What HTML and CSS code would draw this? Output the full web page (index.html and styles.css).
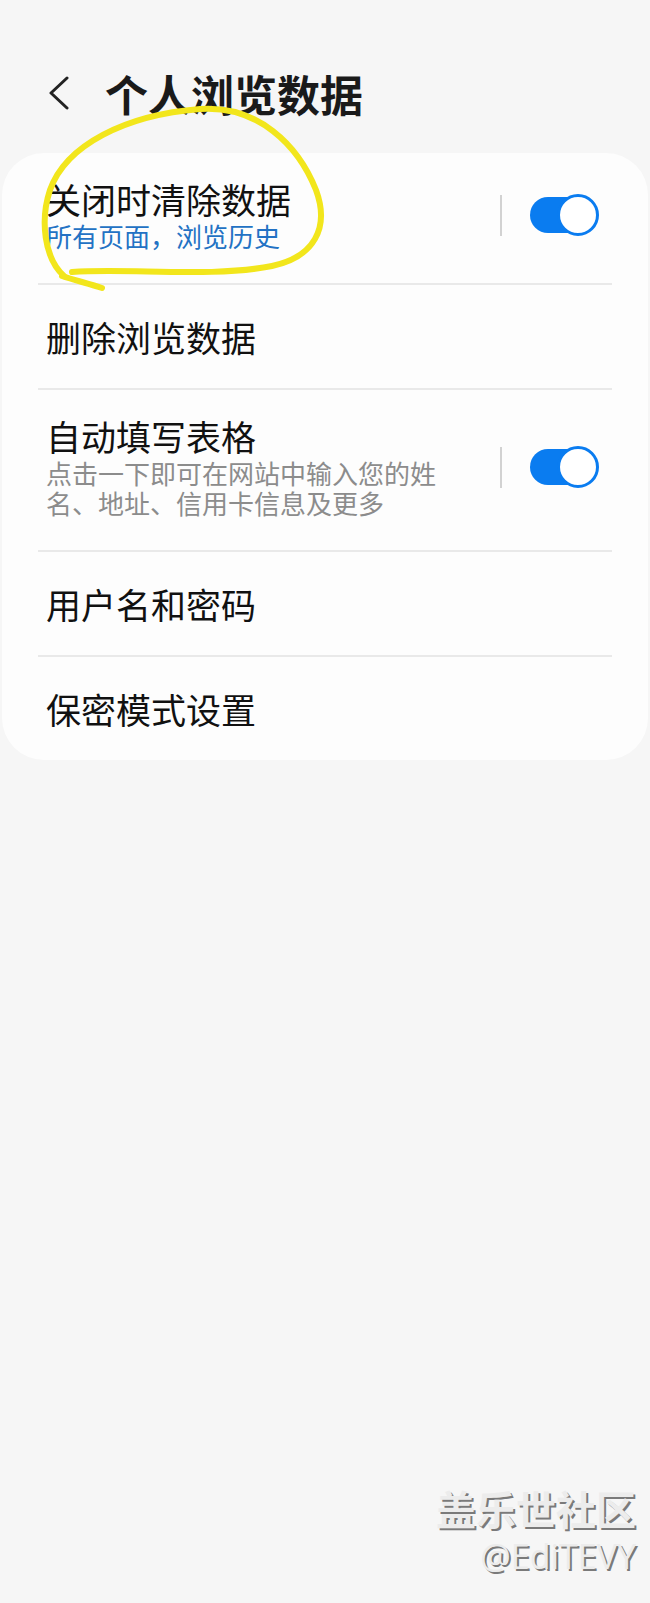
FILE: index.html
```html
<!DOCTYPE html>
<html lang="zh-CN">
<head>
    <meta charset="UTF-8">
    <meta name="viewport" content="width=device-width, initial-scale=1.0">
    <title>个人浏览数据</title>
    <link rel="stylesheet" href="styles.css">
</head>
<body>
    <div class="page">
        <!-- 顶部标题 -->
        <div class="header">
            <svg class="back" width="20" height="34" viewBox="0 0 20 34">
                <polyline points="18,2 2,17 18,32" fill="none" stroke="#222" stroke-width="3" stroke-linecap="round" stroke-linejoin="round"/>
            </svg>
            <h1 class="title">个人浏览数据</h1>
        </div>

        <!-- 设置列表 -->
        <div class="card">
            <div class="row sub-row">
                <div class="text">
                    <p class="name">关闭时清除数据</p>
                    <p class="sub blue">所有页面，浏览历史</p>
                </div>
                <div class="line"></div>
                <div class="switch on"><span class="knob"></span></div>
            </div>
            <div class="row">
                <div class="text">
                    <p class="name">删除浏览数据</p>
                </div>
            </div>
            <div class="row sub-row">
                <div class="text">
                    <p class="name">自动填写表格</p>
                    <p class="sub">点击一下即可在网站中输入您的姓名、地址、信用卡信息及更多</p>
                </div>
                <div class="line"></div>
                <div class="switch on"><span class="knob"></span></div>
            </div>
            <div class="row">
                <div class="text">
                    <p class="name">用户名和密码</p>
                </div>
            </div>
            <div class="row">
                <div class="text">
                    <p class="name">保密模式设置</p>
                </div>
            </div>
        </div>

        <!-- 手写圈注 -->
        <svg class="scribble" width="650" height="320" viewBox="0 0 650 320">
            <path d="M102,288 C90,284 74,280 62,276" fill="none" stroke="#f2e61c" stroke-width="6" stroke-linecap="round"/>
            <path d="M64,276 C44,258 40,220 50,190 C66,145 125,115 200,109 C258,105 298,145 316,190 C330,228 314,257 272,266 C212,278 130,268 72,272" fill="none" stroke="#f2e61c" stroke-width="6" stroke-linecap="round"/>
        </svg>

        <!-- 水印 -->
        <div class="mark">
            <p class="mark-cn">盖乐世社区</p>
            <p class="mark-id">@EdiTEVY</p>
        </div>
    </div>
</body>
</html>
```

FILE: styles.css
```css
*{
    padding: 0;
    margin: 0;
    box-sizing: border-box;
}
body{
    background-color: #f6f6f6;
    font-family: "Noto Sans CJK SC", "Noto Sans", sans-serif;
    color: #111;
}
.page{
    width: 650px;
    height: 1603px;
    position: relative;
    overflow: hidden;
}

/* 标题栏 */
.header{
    height: 153px;
    padding: 33px 0 0 49px;
    display: flex;
    align-items: center;
}
.back{
    display: block;
}
.title{
    margin-left: 36px;
    font-size: 43px;
    line-height: 50px;
    font-weight: 700;
    color: #1a1a1a;
}

/* 卡片 */
.card{
    margin: 0 2px;
    background-color: #fdfdfd;
    border-radius: 42px;
}
.row{
    margin: 0 36px;
    min-height: 105px;
    padding: 29px 13px 29px 8px;
    display: flex;
    align-items: center;
    border-top: 2px solid #e9e9e9;
}
.row:first-child{
    border-top: none;
}
.row.sub-row{
    padding-top: 26px;
    padding-bottom: 32px;
}
.text{
    flex: 1;
}
.name{
    font-size: 35px;
    line-height: 40px;
}
.sub{
    margin-top: 2px;
    font-size: 26px;
    line-height: 30px;
    color: #8c8c8c;
    max-width: 412px;
}
.sub.blue{
    color: #2372c4;
}

/* 分隔竖线 */
.line{
    width: 2px;
    height: 41px;
    background-color: #d2d2d2;
    margin-right: 28px;
}

/* 开关 */
.switch{
    width: 69px;
    height: 42px;
    display: flex;
    align-items: center;
    position: relative;
}
.switch::before{
    content: "";
    display: block;
    width: 60px;
    height: 36px;
    border-radius: 18px;
    background-color: #0a7cf0;
}
.knob{
    position: absolute;
    right: 0;
    top: 0;
    width: 42px;
    height: 42px;
    border-radius: 50%;
    background-color: #fff;
    border: 3px solid #0a7cf0;
}

/* 圈注覆盖层 */
.scribble{
    position: absolute;
    left: 0;
    top: 0;
    pointer-events: none;
}

/* 水印 */
.mark{
    position: absolute;
    right: 14px;
    top: 1484px;
    text-align: right;
}
.mark-cn{
    font-size: 40px;
    line-height: 48px;
    font-weight: 700;
    color: #ececec;
    text-shadow: 2px 2px 0 #7a7a7a;
}
.mark-id{
    margin-top: 4px;
    font-family: "Open Sans", "Noto Sans", sans-serif;
    font-size: 34px;
    line-height: 40px;
    color: #ececec;
    text-shadow: 2px 2px 0 #7a7a7a;
}
```
